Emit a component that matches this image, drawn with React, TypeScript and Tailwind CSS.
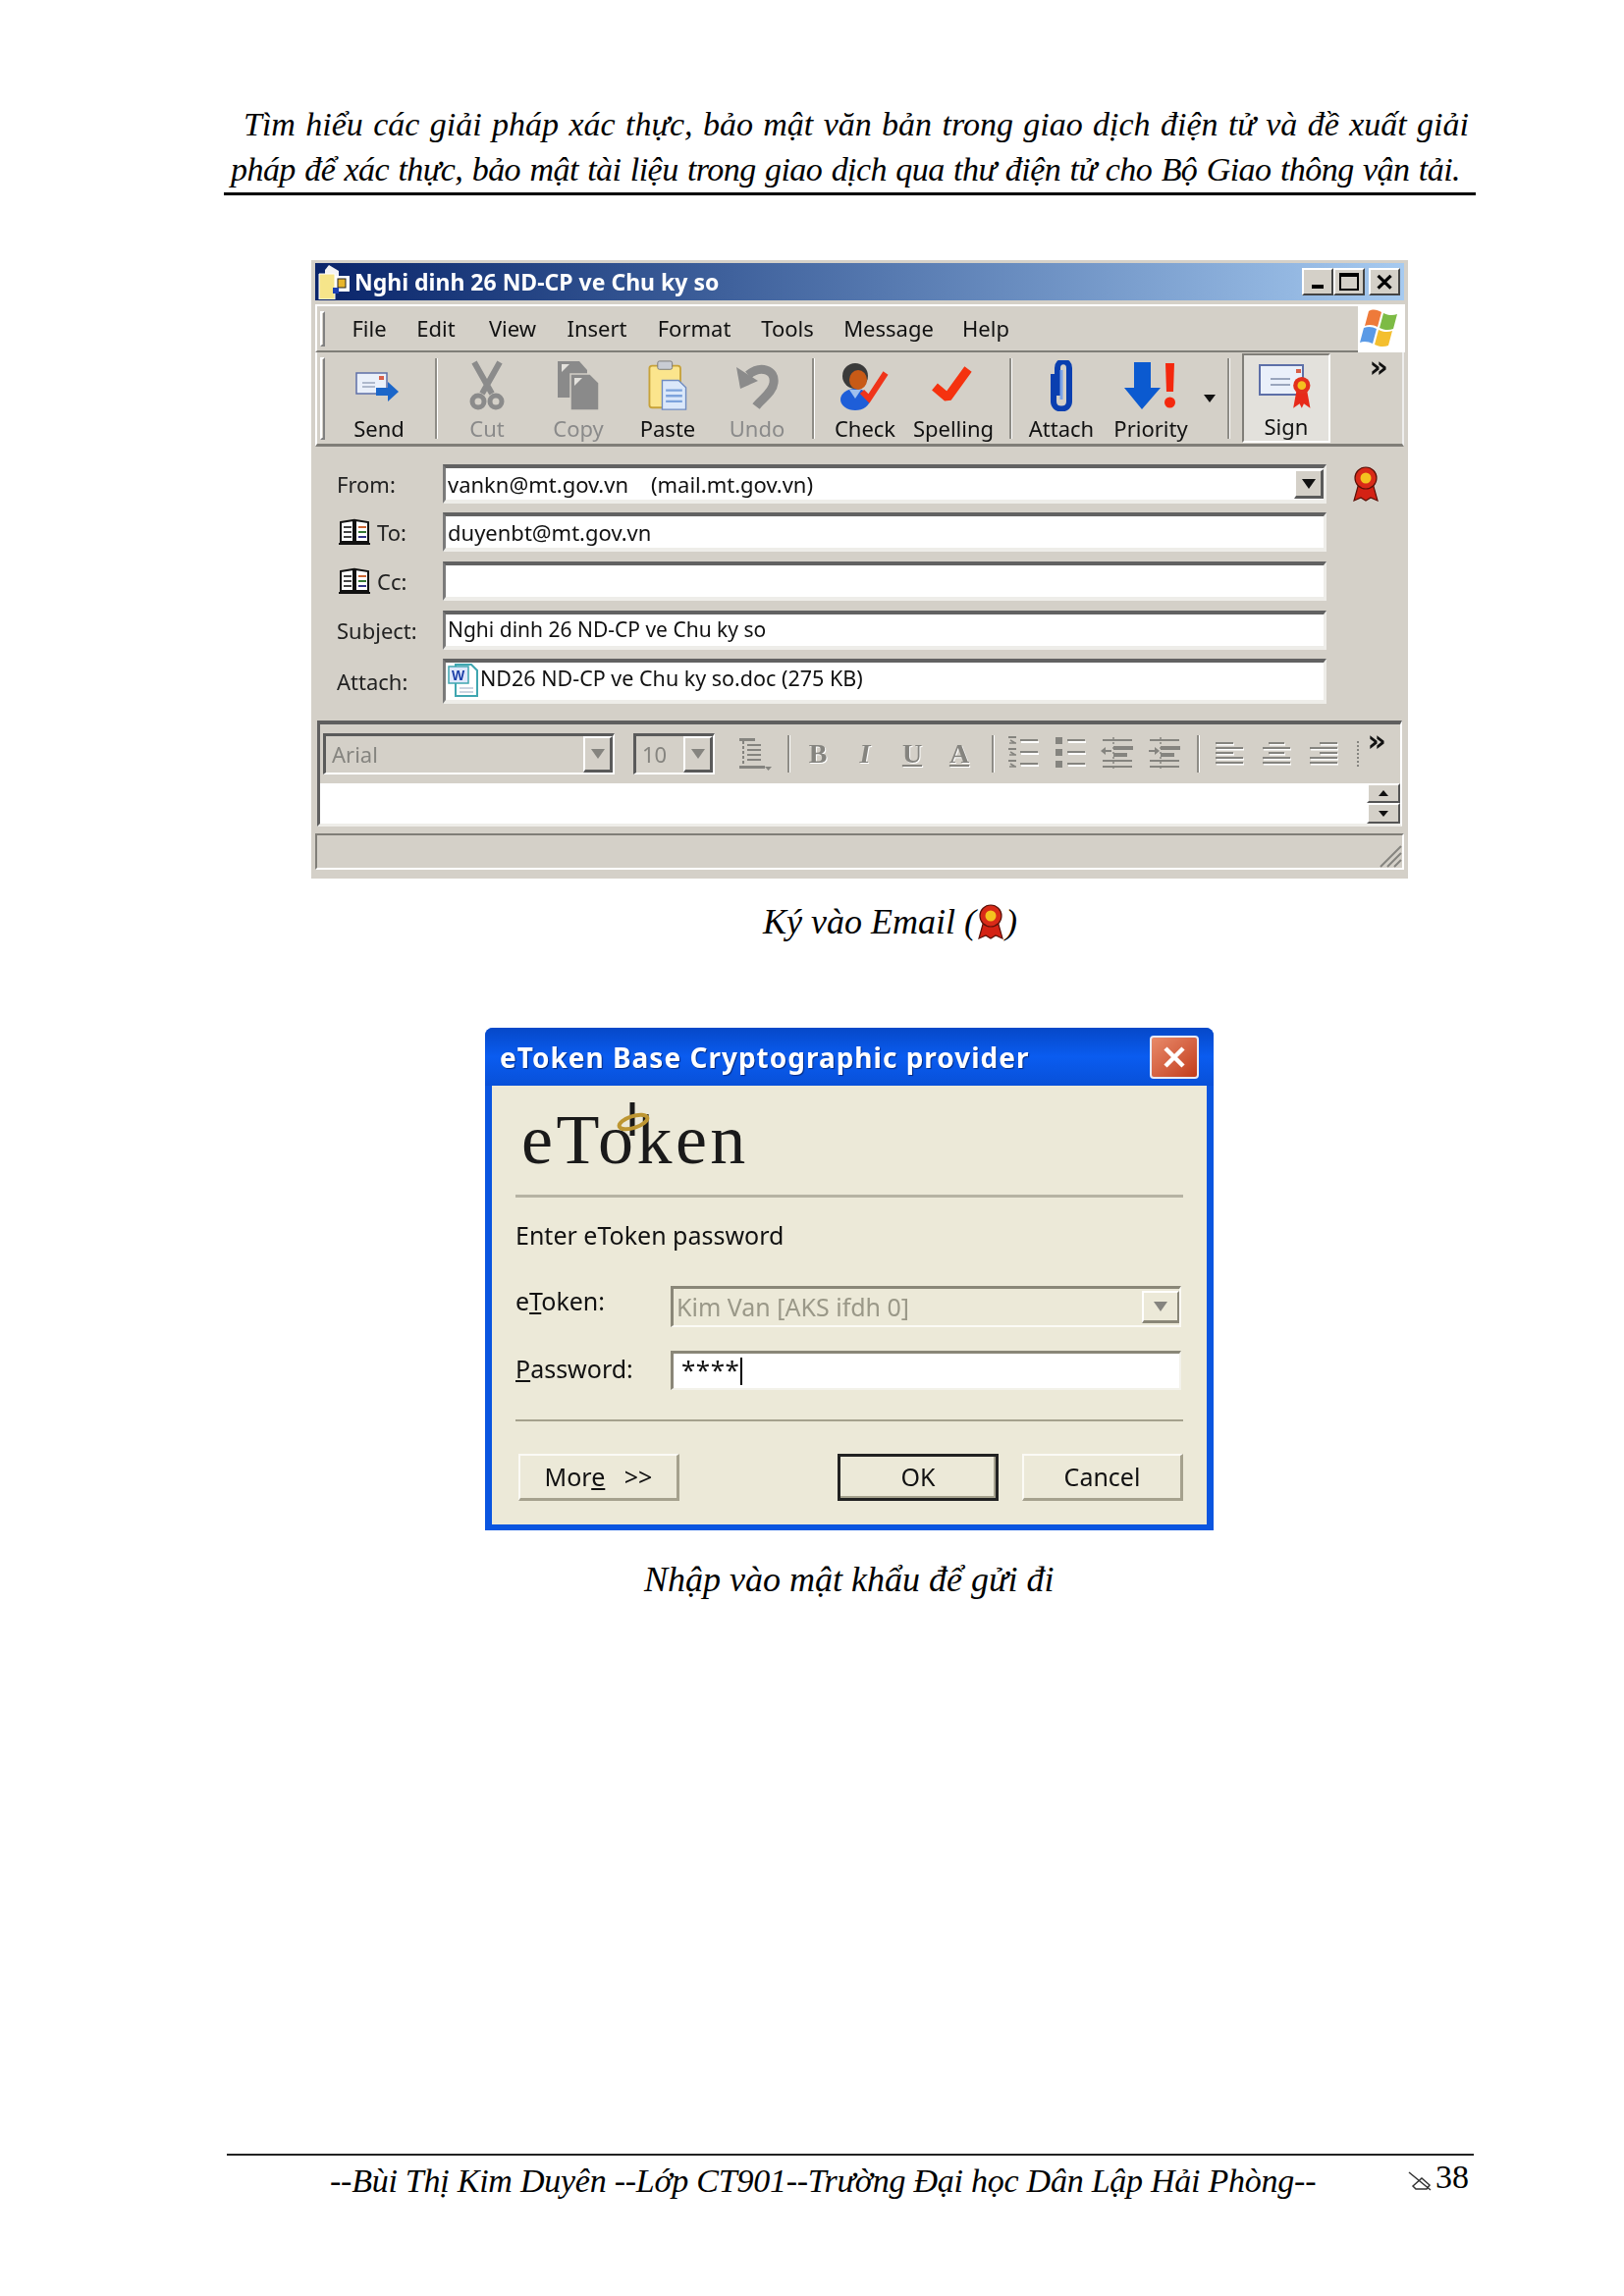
import React from "react";

const Grip = ({ h }: { h: string }) => (
  <div className={`w-[5px] ${h} border-l-2 border-t-2 border-white border-r-2 border-r-[#808080] border-b-2 border-b-[#808080] shrink-0`} />
);
const Sep = ({ ml, h = "h-[82px]" }: { ml: string; h?: string }) => (
  <div className={`w-[3px] ${h} ${ml} bg-[#8e8c86] border-r border-white shrink-0`} />
);

const Env = () => (
  <>
    <rect x="2" y="5" width="31" height="21" fill="#eaf0fa" stroke="#5d6fa8" strokeWidth="1.5" />
    <path d="M8 15h13M8 19h13" stroke="#9aa6bd" strokeWidth="1.6" />
    <rect x="25" y="8" width="5" height="4" fill="#d8604a" />
  </>
);
const SendIcon = () => (
  <svg width="50" height="42" viewBox="0 0 50 36">
    <Env />
    <path d="M22 24h12v-6l11 10-11 10v-6H22z" fill="#1b66c9" transform="translate(0 -4)" />
  </svg>
);
const CutIcon = () => (
  <svg width="38" height="52" viewBox="0 0 38 52" fill="none" stroke="#8b8b8b">
    <path d="M6 2l18 32M32 2L14 34" strokeWidth="6" />
    <circle cx="10" cy="42" r="6" strokeWidth="5" />
    <circle cx="28" cy="42" r="6" strokeWidth="5" />
  </svg>
);
const CopyIcon = () => (
  <svg width="44" height="52" viewBox="0 0 44 52">
    <path d="M1 1h22l8 9v28H1z" fill="#8a8a8a" />
    <path d="M14 14h20l9 9v28H14z" fill="#8a8a8a" stroke="#d4d0c8" strokeWidth="1.5" />
    <path d="M5 4h8l-8 8zM18 18h8l-8 8z" fill="#e4e2dd" />
  </svg>
);
const PasteIcon = () => (
  <svg width="42" height="52" viewBox="0 0 44 56">
    <rect x="2" y="6" width="34" height="46" rx="3" fill="#fbe58d" stroke="#c7a23a" strokeWidth="2" />
    <rect x="11" y="1" width="16" height="9" rx="2" fill="#c9ccd4" stroke="#777" />
    <path d="M16 22h18l8 8v24H16z" fill="#dbe8fa" stroke="#6f8bc0" strokeWidth="1.5" />
    <path d="M20 33h18M20 39h18M20 45h18" stroke="#7da3dc" strokeWidth="2.5" />
  </svg>
);
const UndoIcon = () => (
  <svg width="46" height="50" viewBox="0 0 46 50" fill="none">
    <path d="M14 14C26 4 42 8 40 22 39 32 28 38 22 46" stroke="#8b8b8b" strokeWidth="9" />
    <path d="M2 6l4 22 18-8z" fill="#8b8b8b" />
  </svg>
);
const CheckPersonIcon = () => (
  <svg width="54" height="52" viewBox="0 0 54 52">
    <ellipse cx="17" cy="40" rx="15" ry="11" fill="#1e5ed8" />
    <path d="M11 30h12l-6 9z" fill="#9ec0ee" />
    <circle cx="17" cy="16" r="13" fill="#3a3a3a" />
    <ellipse cx="20" cy="20" rx="9" ry="10" fill="#c85a16" />
    <path d="M24 32l7 7 17-26" fill="none" stroke="#f0341a" strokeWidth="6" />
  </svg>
);
const TickIcon = () => (
  <svg width="46" height="46" viewBox="0 0 46 46" fill="none">
    <path d="M4 24l13 11L38 6" stroke="#f5320f" strokeWidth="9" strokeLinejoin="bevel" />
  </svg>
);
const AttachIcon = () => (
  <svg width="26" height="52" viewBox="0 0 26 52" fill="none">
    <path d="M5 14v28c0 10 16 10 16 0V8C21 -1 9 -1 9 8v28" stroke="#0a3fb0" strokeWidth="6" />
    <path d="M13 10v30" stroke="#7ba3e8" strokeWidth="3" />
  </svg>
);
const PriorityIcon = () => (
  <svg width="54" height="52" viewBox="0 0 54 52">
    <path d="M10 2h17v26h10L18 50 0 28h10z" fill="#0b5ad0" />
    <path d="M42 3h9l-1 29h-7z" fill="#f4280e" />
    <circle cx="46.500" cy="43" r="5.500" fill="#f4280e" />
  </svg>
);
const Ribbon = ({ s = 30 }: { s?: number }) => (
  <svg width={s} height={s * 1.2} viewBox="0 0 30 36">
    <path d="M8 17L3 35l7-3 5 3 5-3 7 3-5-18z" fill="#d42214" stroke="#5a1008" strokeWidth="1.200" />
    <circle cx="15" cy="12" r="11" fill="#d92a18" stroke="#5a1008" strokeWidth="1.200" />
    <circle cx="15" cy="12" r="5.500" fill="#f4c21f" />
  </svg>
);
const SignIcon = () => (
  <svg width="56" height="52" viewBox="0 0 56 52">
    <rect x="1" y="4" width="44" height="30" fill="#eaf0fa" stroke="#5d6fa8" strokeWidth="2" />
    <path d="M12 18h20M12 24h20" stroke="#9aa6bd" strokeWidth="2" />
    <rect x="38" y="8" width="5" height="4" fill="#d8604a" />
    <g transform="translate(33 16) scale(.72)">
      <path d="M8 17L3 44l9-6 3 6 3-6 9 6-5-27z" fill="#e72a1a" />
      <circle cx="15" cy="12" r="12" fill="#e3301d" />
      <circle cx="15" cy="12" r="6" fill="#f4c21f" />
    </g>
  </svg>
);
const BookIcon = () => (
  <svg width="32" height="28" viewBox="0 0 32 28" fill="none">
    <path d="M2 4l13 -2v22H2zM17 2l13 2v20H17z" fill="#fff" stroke="#111" strokeWidth="2" />
    <path d="M5 9h8M5 14h8M5 19h8" stroke="#444" strokeWidth="2" />
    <path d="M20 9h8" stroke="#c63" strokeWidth="2" />
    <path d="M20 14h8" stroke="#373" strokeWidth="2" />
    <path d="M20 19h8" stroke="#338" strokeWidth="2" />
    <path d="M0 26h32" stroke="#111" strokeWidth="2" />
  </svg>
);
const DocIcon = () => (
  <svg width="32" height="36" viewBox="0 0 32 36">
    <path d="M8 2h16l6 6v26H8z" fill="#fff" stroke="#3fa6b0" strokeWidth="2" />
    <rect x="1" y="4" width="20" height="17" fill="#dfe8fb" stroke="#3fa6b0" strokeWidth="1.5" />
    <text x="4" y="18" fontSize="14" fontWeight="700" fill="#1d3fa8" fontFamily="Liberation Sans">W</text>
    <path d="M12 26h14M12 30h14" stroke="#b9c6d6" strokeWidth="1.500" />
  </svg>
);
const TitleIcon = () => (
  <svg width="34" height="36" viewBox="0 0 34 36">
    <path d="M12 1l10 6v8H8V6z" fill="#f4f4f4" />
    <path d="M2 10h16v26H2z" fill="#f6e58a" stroke="#fff" />
    <rect x="18" y="12" width="15" height="16" fill="#fff" />
    <rect x="21" y="15" width="8" height="9" fill="#e7b52c" stroke="#222" />
    <rect x="16" y="24" width="6" height="6" fill="#1b3fb2" />
  </svg>
);
const Flag = () => (
  <svg width="42" height="42" viewBox="0 0 42 42">
    <path d="M11 3c5-3 9-1 13 1l-4 15c-4-2-8-3-13-1z" fill="#ee7a3a" />
    <path d="M26 5c4 2 9 3 14 1l-4 15c-5 2-10 1-14-1z" fill="#7dbb45" />
    <path d="M6 20c5-2 9-1 13 1l-4 15c-4-2-9-3-13-1z" fill="#5a9ae6" />
    <path d="M21 22c4 2 9 3 14 1l-4 15c-5 2-10 1-14-1z" fill="#f4bf2f" />
  </svg>
);

const ToolBtn = ({ w, label, icon, dim, ml = "" }: { w: string; label: string; icon: React.ReactNode; dim?: boolean; ml?: string }) => (
  <div className={`${w} ${ml} h-full shrink-0 flex flex-col items-center justify-between pt-[6px] pb-[2px]`}>
    <div className="h-[56px] flex items-center justify-center">{icon}</div>
    <span className={`text-[22px] leading-[28px] ${dim ? "text-[#8a8a8a]" : "text-[#111]"}`}>{label}</span>
  </div>
);

const Sunken = ({ h, children, className = "" }: { h: string; children?: React.ReactNode; className?: string }) => (
  <div className={`${h} w-[900px] flex items-center bg-white border-t-[4px] border-t-[#626262] border-l-[3px] border-l-[#7a7a7a] border-b-[4px] border-b-[#eeede9] border-r-[3px] border-r-[#eeede9] pl-[2px] text-[22px] text-[#111] overflow-hidden ${className}`}>
    {children}
  </div>
);

const FieldRow = ({ label, book, mt, children }: { label: string; book?: boolean; mt?: string; children: React.ReactNode }) => (
  <div className={`flex items-center ${mt ?? ""}`}>
    <div className={`w-[130px] flex items-center gap-[7px] text-[22px] text-[#222] shrink-0 ${book ? "pl-[24px]" : "pl-[22px]"}`}>
      {book && <BookIcon />}
      <span>{label}</span>
    </div>
    {children}
  </div>
);

const Arrow = ({ grey }: { grey?: boolean }) => (
  <svg width="14" height="10" viewBox="0 0 14 10"><path d="M0 0h14L7 10z" fill={grey ? "#85847f" : "#111"} /></svg>
);
const ComboBtn = ({ w = "w-[30px]", grey }: { w?: string; grey?: boolean }) => (
  <div className={`${w} h-full shrink-0 bg-[#d4d0c8] border-t-2 border-l-2 border-white border-r-[3px] border-r-[#5a5a5a] border-b-[3px] border-b-[#5a5a5a] flex items-center justify-center`}>
    <Arrow grey={grey} />
  </div>
);

const Cell = ({ ml = "", w = "w-[48px]", children }: { ml?: string; w?: string; children: React.ReactNode }) => (
  <div className={`${w} ${ml} shrink-0 h-[44px] flex items-center justify-center`}>{children}</div>
);

const G = "#85847f";
const Lines = ({ kind }: { kind: "left" | "center" | "right" }) => {
  const rows: [number, number][] = kind === "left"
    ? [[2, 18], [2, 28], [2, 18], [2, 28], [2, 28]]
    : kind === "center"
    ? [[8, 16], [2, 28], [8, 16], [2, 28], [2, 28]]
    : [[12, 18], [2, 28], [12, 18], [2, 28], [2, 28]];
  return (
    <svg width="32" height="30" viewBox="0 0 32 30">
      {rows.map(([x, w], i) => (
        <g key={i}>
          <rect x={x + 1} y={3 + i * 5 + 1.500} width={w} height="2" fill="#fff" />
          <rect x={x} y={3 + i * 5} width={w} height="2" fill={G} />
        </g>
      ))}
    </svg>
  );
};
const ListIcon = ({ numbered }: { numbered?: boolean }) => (
  <svg width="34" height="36" viewBox="0 0 34 36">
    {[4, 16, 28].map((y) => (
      <g key={y}>
        <path d={`M14 ${y + 1}h18`} stroke="#fff" strokeWidth="2" transform="translate(1 1)" />
        <path d={`M14 ${y}h18`} stroke={G} strokeWidth="2" />
        {numbered
          ? <rect x="2" y={y - 4} width="8" height="2" fill={G} />
          : <rect x="2" y={y - 3} width="7" height="7" fill={G} />}
        {numbered && <path d={`M3 ${y + 3}h7M4 ${y}l5 3`} stroke={G} strokeWidth="1.500" />}
      </g>
    ))}
  </svg>
);
const SpacingIcon = () => (
  <svg width="36" height="38" viewBox="0 0 36 38">
    <path d="M3 3h16v3H3zM3 31h26v3H3z" fill={G} />
    <path d="M7 6v24" stroke={G} strokeWidth="2" strokeDasharray="3 2" />
    <path d="M11 10h14M11 15h14M11 20h14M11 25h14" stroke={G} strokeWidth="2" />
    <path d="M29 32h7l-3.500 4z" fill={G} />
  </svg>
);
const IndentIcon = ({ rtl }: { rtl?: boolean }) => (
  <svg width="36" height="36" viewBox="0 0 36 36">
    <path d="M3 4h30M3 31h30M3 25h30" stroke={G} strokeWidth="2" />
    <path d="M14 10h20v4H14zM14 17h14v4H14z" fill={G} />
    <path d="M14 1v34" stroke={G} strokeWidth="1.500" strokeDasharray="2 3" />
    <path d={rtl ? "M2 14h6v-3l5 4-5 4v-3H2z" : "M12 14H6v-3l-5 4 5 4v-3h6z"} fill={G} />
  </svg>
);
const Chevrons = () => <span className="text-[30px] font-bold leading-none text-[#111] font-['DejaVu_Sans']">»</span>;

const Btn = ({ w, ml = "", children, dflt }: { w: string; ml?: string; children: React.ReactNode; dflt?: boolean }) => (
  <div className={`${w} ${ml} h-[48px] shrink-0 flex items-center justify-center bg-[#ece9d8] text-[25px] text-[#111] ${dflt ? "border-[3px] border-t-[#222] border-l-[#222] border-r-[#222] border-b-[#222] shadow-[inset_-2px_-2px_0_#a5a18d]" : "border-t-2 border-l-2 border-t-[#fbfaf5] border-l-[#fbfaf5] border-r-[3px] border-b-[3px] border-r-[#a5a18d] border-b-[#a5a18d]"}`}>
    {children}
  </div>
);

const App = () => (
  <div className="w-[1654px] h-[2339px] bg-white flex flex-col overflow-hidden font-['Liberation_Serif',serif] text-black">
    {/* page header */}
    <div className="mt-[104px] ml-[228px] w-[1275px] border-b-[3px] border-black italic text-[34px] leading-[46px]">
      <div className="pl-[20px] pr-[7px] text-justify [text-align-last:justify]">Tìm hiểu các giải pháp xác thực, bảo mật văn bản trong giao dịch điện tử và đề xuất giải</div>
      <div className="pl-[7px] pr-[16px] tracking-[-0.55px] text-justify [text-align-last:justify]">pháp để xác thực, bảo mật tài liệu trong giao dịch qua thư điện tử cho Bộ Giao thông vận tải.</div>
    </div>

    {/* Outlook window */}
    <div className="mt-[66px] ml-[317px] w-[1117px] h-[630px] shrink-0 bg-[#d4d0c8] px-[4px] pt-[3px] flex flex-col blur-[0.5px] font-['Noto_Sans',sans-serif] relative">
      <div className="h-[38px] shrink-0 flex items-center bg-gradient-to-r from-[#0a246a] to-[#a6caf0] pl-[2px] pr-[4px]">
        <TitleIcon />
        <span className="ml-[4px] text-white font-bold text-[23px]">Nghi dinh 26 ND-CP ve Chu ky so</span>
        <div className="ml-auto flex gap-0">
          {["_", "□", "×"].map((c, i) => (
            <div key={c} className={`w-[32px] h-[28px] ${i === 2 ? "ml-[4px]" : ""} bg-[#d4d0c8] border-t-2 border-l-2 border-white border-r-2 border-b-2 border-r-[#444] border-b-[#444] flex items-center justify-center text-black font-bold text-[24px] leading-none`}>{i === 0 ? <div className="w-[12px] h-[4px] bg-black mt-[10px]" /> : i === 1 ? <div className="w-[20px] h-[18px] border-2 border-t-[4px] border-black" /> : "✕"}</div>
          ))}
        </div>
      </div>

      {/* menu */}
      <div className="h-[49px] mt-[4px] shrink-0 flex items-center border-t-2 border-t-white border-b-2 border-b-[#807e78] border-l-2 border-l-white pl-[3px] relative">
        <Grip h="h-[36px]" />
        {[["File", "w-[70px] ml-[10px]"], ["Edit", "w-[66px]"], ["View", "w-[90px]"], ["Insert", "w-[82px]"], ["Format", "w-[116px]"], ["Tools", "w-[74px]"], ["Message", "w-[132px]"], ["Help", "w-[66px]"]].map(([t, w]) => (
          <span key={t} className={`${w} text-center text-[22px] text-[#111]`}>{t}</span>
        ))}
        <div className="absolute right-[-1px] top-[-2px] w-[48px] h-[49px] bg-white flex items-center justify-start"><Flag /></div>
      </div>

      {/* toolbar */}
      <div className="h-[96px] shrink-0 flex items-center border-b-[3px] border-b-[#807e78] border-l-2 border-l-white border-r-2 border-r-[#eee] pl-[3px]">
        <Grip h="h-[84px]" />
        <ToolBtn w="w-[110px]" label="Send" icon={<SendIcon />} />
        <Sep ml="ml-[2px]" />
        <ToolBtn w="w-[100px]" label="Cut" dim icon={<CutIcon />} />
        <ToolBtn w="w-[86px]" label="Copy" dim icon={<CopyIcon />} />
        <ToolBtn w="w-[96px]" label="Paste" icon={<PasteIcon />} />
        <ToolBtn w="w-[86px]" label="Undo" dim icon={<UndoIcon />} />
        <Sep ml="ml-[13px]" />
        <ToolBtn w="w-[102px]" label="Check" icon={<CheckPersonIcon />} />
        <ToolBtn w="w-[78px]" label="Spelling" icon={<TickIcon />} />
        <Sep ml="ml-[18px]" />
        <ToolBtn w="w-[100px]" label="Attach" icon={<AttachIcon />} />
        <ToolBtn w="w-[82px]" label="Priority" icon={<PriorityIcon />} />
        <div className="w-[37px] h-[60px] flex items-center justify-center shrink-0"><svg width="12" height="8" viewBox="0 0 12 8"><path d="M0 0h12L6 8z" fill="#111" /></svg></div>
        <Sep ml="" />
        <div className="ml-[12px] w-[90px] h-[91px] shrink-0 bg-[#e3e1dc] border-t-2 border-l-2 border-t-[#807e78] border-l-[#807e78] border-r-2 border-b-2 border-white">
          <ToolBtn w="w-full" label="Sign" icon={<SignIcon />} />
        </div>
        <div className="ml-auto mr-[14px] self-start mt-[0px]"><Chevrons /></div>
      </div>

      {/* address fields */}
      <div className="mt-[18px] flex flex-col shrink-0">
        <FieldRow label="From:">
          <Sunken h="h-[40px]" className="pr-0">
            <span>vankn@mt.gov.vn&nbsp;&nbsp;&nbsp;&nbsp;(mail.mt.gov.vn)</span>
            <div className="ml-auto h-full py-[1px]"><ComboBtn /></div>
          </Sunken>
          <div className="ml-[25px] -mt-[1px]"><Ribbon s={30} /></div>
        </FieldRow>
        <FieldRow label="To:" book mt="mt-[9px]"><Sunken h="h-[40px]">duyenbt@mt.gov.vn</Sunken></FieldRow>
        <FieldRow label="Cc:" book mt="mt-[10px]"><Sunken h="h-[40px]" /></FieldRow>
        <FieldRow label="Subject:" mt="mt-[10px]"><Sunken h="h-[40px]"><span className="text-[21px]">Nghi dinh 26 ND-CP ve Chu ky so</span></Sunken></FieldRow>
        <FieldRow label="Attach:" mt="mt-[9px]">
          <Sunken h="h-[46px]" className="items-start"><DocIcon /><span className="ml-[1px] text-[21.5px]">ND26 ND-CP ve Chu ky so.doc (275 KB)</span></Sunken>
        </FieldRow>
      </div>

      {/* format toolbar + editor */}
      <div className="mt-[17px] mx-[2px] shrink-0 border-t-[4px] border-t-[#5f5f5f] border-l-[3px] border-l-[#5f5f5f] border-r-2 border-r-white border-b-[3px] border-b-[#eeede9]">
        <div className="h-[60px] flex items-center pl-[3px] text-[22px] text-[#85847f]">
          <div className="w-[297px] h-[42px] shrink-0 flex items-center border-t-[3px] border-l-[3px] border-t-[#5a5a5a] border-l-[#5a5a5a] border-r-2 border-b-2 border-white pl-[6px]">
            <span>Arial</span>
            <div className="ml-auto h-full"><ComboBtn grey /></div>
          </div>
          <div className="ml-[19px] w-[83px] h-[42px] shrink-0 flex items-center border-t-[3px] border-l-[3px] border-t-[#5a5a5a] border-l-[#5a5a5a] border-r-2 border-b-2 border-white pl-[6px]">
            <span>10</span>
            <div className="ml-auto h-full"><ComboBtn grey /></div>
          </div>
          <Cell ml="ml-[16px]"><SpacingIcon /></Cell>
          <Sep ml="ml-[10px]" h="h-[38px]" />
          <div className="contents font-['Liberation_Serif'] font-bold text-[28px] [text-shadow:1px_1px_0_#fff]">
            <Cell ml="ml-[4px]">B</Cell>
            <Cell><i>I</i></Cell>
            <Cell><u>U</u></Cell>
            <Cell><u>A</u></Cell>
          </div>
          <Sep ml="ml-[9px]" h="h-[38px]" />
          <Cell ml="ml-[5px]"><ListIcon numbered /></Cell>
          <Cell><ListIcon /></Cell>
          <Cell><IndentIcon /></Cell>
          <Cell><IndentIcon rtl /></Cell>
          <Sep ml="ml-[9px]" h="h-[38px]" />
          <Cell ml="ml-[6px]"><Lines kind="left" /></Cell>
          <Cell><Lines kind="center" /></Cell>
          <Cell><Lines kind="right" /></Cell>
          <div className="ml-[10px] w-0 h-[26px] border-l-2 border-dotted border-[#85847f]" />
          <div className="ml-auto mr-[14px] self-start mt-[2px]"><Chevrons /></div>
        </div>
        <div className="h-[41px] bg-white flex justify-end">
          <div className="w-[34px] h-full flex flex-col bg-[#d4d0c8]">
            <div className="h-[20px] border-t-2 border-l-2 border-white border-r-2 border-b-2 border-r-[#555] border-b-[#555] flex items-center justify-center"><svg width="10" height="6" viewBox="0 0 10 6"><path d="M0 6h10L5 0z" fill="#111" /></svg></div>
            <div className="h-[21px] border-t-2 border-l-2 border-white border-r-2 border-b-2 border-r-[#555] border-b-[#555] flex items-center justify-center"><svg width="10" height="6" viewBox="0 0 10 6"><path d="M0 0h10L5 6z" fill="#111" /></svg></div>
          </div>
        </div>
      </div>

      {/* status bar */}
      <div className="mt-[7px] h-[37px] shrink-0 border-t-2 border-t-[#807e78] border-l-2 border-l-[#807e78] border-b-2 border-b-white border-r-2 border-r-white flex justify-end items-end">
        <svg width="26" height="26" viewBox="0 0 26 26" stroke="#85847f" strokeWidth="2"><path d="M25 4L4 25M25 11L11 25M25 18L18 25" /></svg>
      </div>
    </div>

    {/* caption 1 */}
    <div className="mt-[23px] ml-[777px] h-[42px] flex items-center italic text-[36px] leading-[42px] whitespace-pre">
      <span>Ký vào Email (</span>
      <Ribbon s={30} />
      <span>)</span>
    </div>

    {/* eToken dialog */}
    <div className="mt-[87px] ml-[494px] w-[742px] h-[512px] shrink-0 rounded-t-[8px] bg-[#0a55e0] px-[7px] pb-[6px] flex flex-col blur-[0.4px] font-['Noto_Sans',sans-serif]">
      <div className="h-[59px] shrink-0 flex items-center justify-between -mx-[7px] px-[15px] rounded-t-[8px] bg-gradient-to-b from-[#0648c8] via-[#0a5cf0] to-[#0850d8]">
        <span className="text-white font-bold text-[28px] tracking-[1px] [text-shadow:1px_1px_1px_#032a80]">eToken Base Cryptographic provider</span>
        <div className="w-[50px] h-[44px] rounded-[4px] border-2 border-[#e7eaf6] bg-gradient-to-br from-[#e88a6a] to-[#c23a18] flex items-center justify-center">
          <svg width="26" height="26" viewBox="0 0 26 26"><path d="M4 4l18 18M22 4L4 22" stroke="#fff" strokeWidth="4.500" /></svg>
        </div>
      </div>
      <div className="flex-1 bg-[#ece9d8] flex flex-col px-[24px] text-[25px] text-[#111]">
        <div className="h-[114px] shrink-0 border-b-[3px] border-b-[#b6b3a3] pt-[15px] pl-[6px] relative">
          <span className="font-['Liberation_Serif',serif] text-[72px] leading-[80px] tracking-[3.5px] text-[#1a1a1a]">eToken</span>
          <svg className="absolute left-[98px] top-[17px]" width="44" height="44" viewBox="0 0 44 44" fill="none">
            <path d="M21 0v34" stroke="#1a1a1a" strokeWidth="5" />
            <ellipse cx="22" cy="20" rx="15" ry="6" transform="rotate(-18 22 20)" stroke="#bd9632" strokeWidth="4" />
          </svg>
        </div>
        <div className="mt-[22px] leading-[32px]">Enter eToken password</div>
        <div className="mt-[36px] flex items-center">
          <span className="w-[158px] shrink-0 -mt-[10px]">e<u>T</u>oken:</span>
          <div className="w-[520px] h-[42px] flex items-center border-t-[3px] border-l-[3px] border-t-[#8a8778] border-l-[#8a8778] border-r-2 border-b-2 border-[#fbfaf5] pl-[3px] text-[#9a9888]">
            <span>Kim Van [AKS ifdh 0]</span>
            <div className="ml-auto h-full py-[2px]"><div className="w-[38px] h-full bg-[#ece9d8] border-t-2 border-l-2 border-white border-r-2 border-b-[3px] border-r-[#8a8778] border-b-[#8a8778] flex items-center justify-center"><Arrow grey /></div></div>
          </div>
        </div>
        <div className="mt-[24px] flex items-center">
          <span className="w-[158px] shrink-0 -mt-[2px]"><u>P</u>assword:</span>
          <div className="w-[520px] h-[40px] flex items-center bg-white border-t-[3px] border-l-[3px] border-t-[#8a8778] border-l-[#8a8778] border-r-2 border-b-2 border-[#f3f2ea] pl-[8px]">
            <span className="text-[26px] leading-none tracking-[0.5px] -mt-[4px]">****</span>
            <div className="w-[2px] h-[28px] bg-black ml-[1px]" />
          </div>
        </div>
        <div className="mt-[30px] h-[2px] shrink-0 bg-[#a5a18d]" />
        <div className="mt-[33px] flex">
          <Btn w="w-[164px]" ml="ml-[3px]"><span>Mor<u>e</u>&nbsp;&nbsp;&nbsp;&gt;&gt;</span></Btn>
          <Btn w="w-[164px]" ml="ml-[161px]" dflt>OK</Btn>
          <Btn w="w-[164px]" ml="ml-[24px]">Cancel</Btn>
        </div>
      </div>
    </div>

    {/* caption 2 */}
    <div className="mt-[29px] ml-[656px] italic text-[36px] leading-[42px]">Nhập vào mật khẩu để gửi đi</div>

    {/* footer */}
    <div className="mt-auto mb-[97px] ml-[231px] w-[1270px] border-t-2 border-t-[#222] pt-[6px] flex items-center italic text-[34px] leading-[40px]">
      <span className="ml-[105px] w-[1003px] shrink-0 whitespace-nowrap tracking-[-0.25px]">--Bùi Thị Kim Duyên --Lớp CT901--Trường Đại học Dân Lập Hải Phòng--</span>
      <svg className="ml-[95px] shrink-0" width="26" height="22" viewBox="0 0 26 22" fill="none" stroke="#333" strokeWidth="1.500"><path d="M1 2l22 18M5 16l9-8 8 7-3 4H8z" /></svg>
      <span className="not-italic ml-[2px] -mt-[8px]">38</span>
    </div>
  </div>
);

export default App;
